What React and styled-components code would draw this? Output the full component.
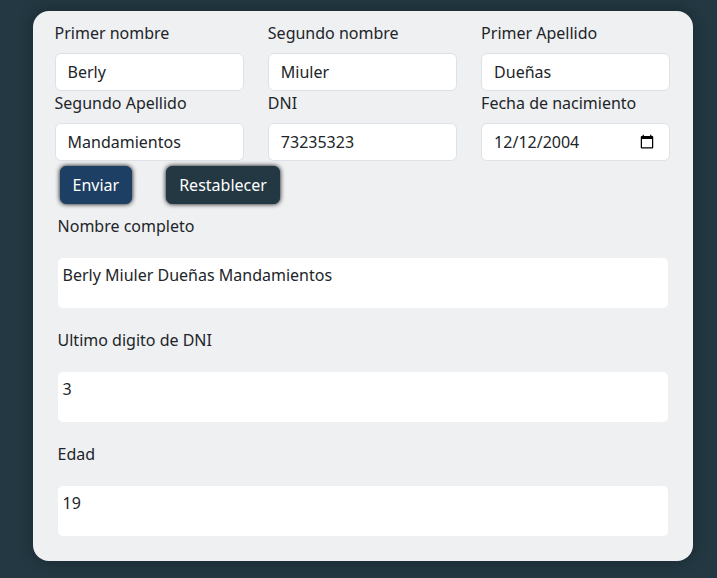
import React from "react";
import styled, { createGlobalStyle } from "styled-components";

const GlobalStyle = createGlobalStyle`
  *, *::before, *::after { box-sizing: border-box; }
  html, body { margin: 0; height: 100%; }
  body {
    overflow: hidden;
    background: #233842;
    color: #212529;
    font: 400 16px/24px "Noto Sans", sans-serif;
  }
`;

const Page = styled.main`
  display: flow-root;
  height: 578px;
`;

const Card = styled.section`
  width: 660px;
  height: 550px;
  margin: 11px 0 0 33px;
  padding: 10px 22.6px 0 21.55px;
  border-radius: 16px;
  background: #eff0f2;
  box-shadow: 0 0 15px rgba(0, 0, 0, 0.3);
`;

const FieldGrid = styled.form`
  display: grid;
  grid-template-columns: repeat(3, 1fr);
  column-gap: 24px;
`;

const FieldLabel = styled.label`
  display: block;
  margin-bottom: 8px;
`;

const Input = styled.input`
  display: block;
  width: 100%;
  height: 38px;
  padding: 6px 12px;
  border: 1px solid #dee2e6;
  border-radius: 6px;
  outline: none;
  background: #fff;
  color: #212529;
  font: inherit;

  &::-webkit-date-and-time-value {
    min-height: 24px;
  }
  &::-webkit-datetime-edit,
  &::-webkit-datetime-edit-month-field,
  &::-webkit-datetime-edit-day-field,
  &::-webkit-datetime-edit-year-field {
    padding: 0;
  }
`;

const Actions = styled.div`
  display: flex;
  gap: 34px;
  margin: 5px 0 0 5px;
`;

const Button = styled.button`
  height: 38px;
  padding: 6px 12px;
  border: 1px solid ${(p) => p.$color};
  border-radius: 6px;
  background: ${(p) => p.$color};
  box-shadow: 0 0 5px #000;
  color: #fff;
  font: inherit;
`;

const Results = styled.div`
  display: grid;
  row-gap: 20px;
  margin: 10px 2.4px 0 3px;
`;

const ResultLabel = styled.div`
  height: 24px;
  margin-bottom: 20px;
`;

const ResultValue = styled.output`
  display: block;
  height: 50px;
  padding: 5px;
  border-radius: 5px;
  background: #fff;
`;

const fields = [
  { label: "Primer nombre", value: "Berly" },
  { label: "Segundo nombre", value: "Miuler" },
  { label: "Primer Apellido", value: "Dueñas" },
  { label: "Segundo Apellido", value: "Mandamientos" },
  { label: "DNI", value: "73235323" },
  { label: "Fecha de nacimiento", value: "2004-12-12", type: "date" },
];

const results = [
  { label: "Nombre completo", value: "Berly Miuler Dueñas Mandamientos" },
  { label: "Ultimo digito de DNI", value: "3" },
  { label: "Edad", value: "19" },
];

export default function App() {
  return (
    <Page>
      <GlobalStyle />
      <Card>
        <FieldGrid id="persona">
          {fields.map((f, i) => (
            <div key={f.label}>
              <FieldLabel htmlFor={`campo-${i}`}>{f.label}</FieldLabel>
              <Input id={`campo-${i}`} type={f.type || "text"} defaultValue={f.value} />
            </div>
          ))}
        </FieldGrid>
        <Actions>
          <Button type="button" $color="#1d3f63">Enviar</Button>
          <Button type="reset" form="persona" $color="#233842">Restablecer</Button>
        </Actions>
        <Results>
          {results.map((r) => (
            <div key={r.label}>
              <ResultLabel>{r.label}</ResultLabel>
              <ResultValue>{r.value}</ResultValue>
            </div>
          ))}
        </Results>
      </Card>
    </Page>
  );
}
